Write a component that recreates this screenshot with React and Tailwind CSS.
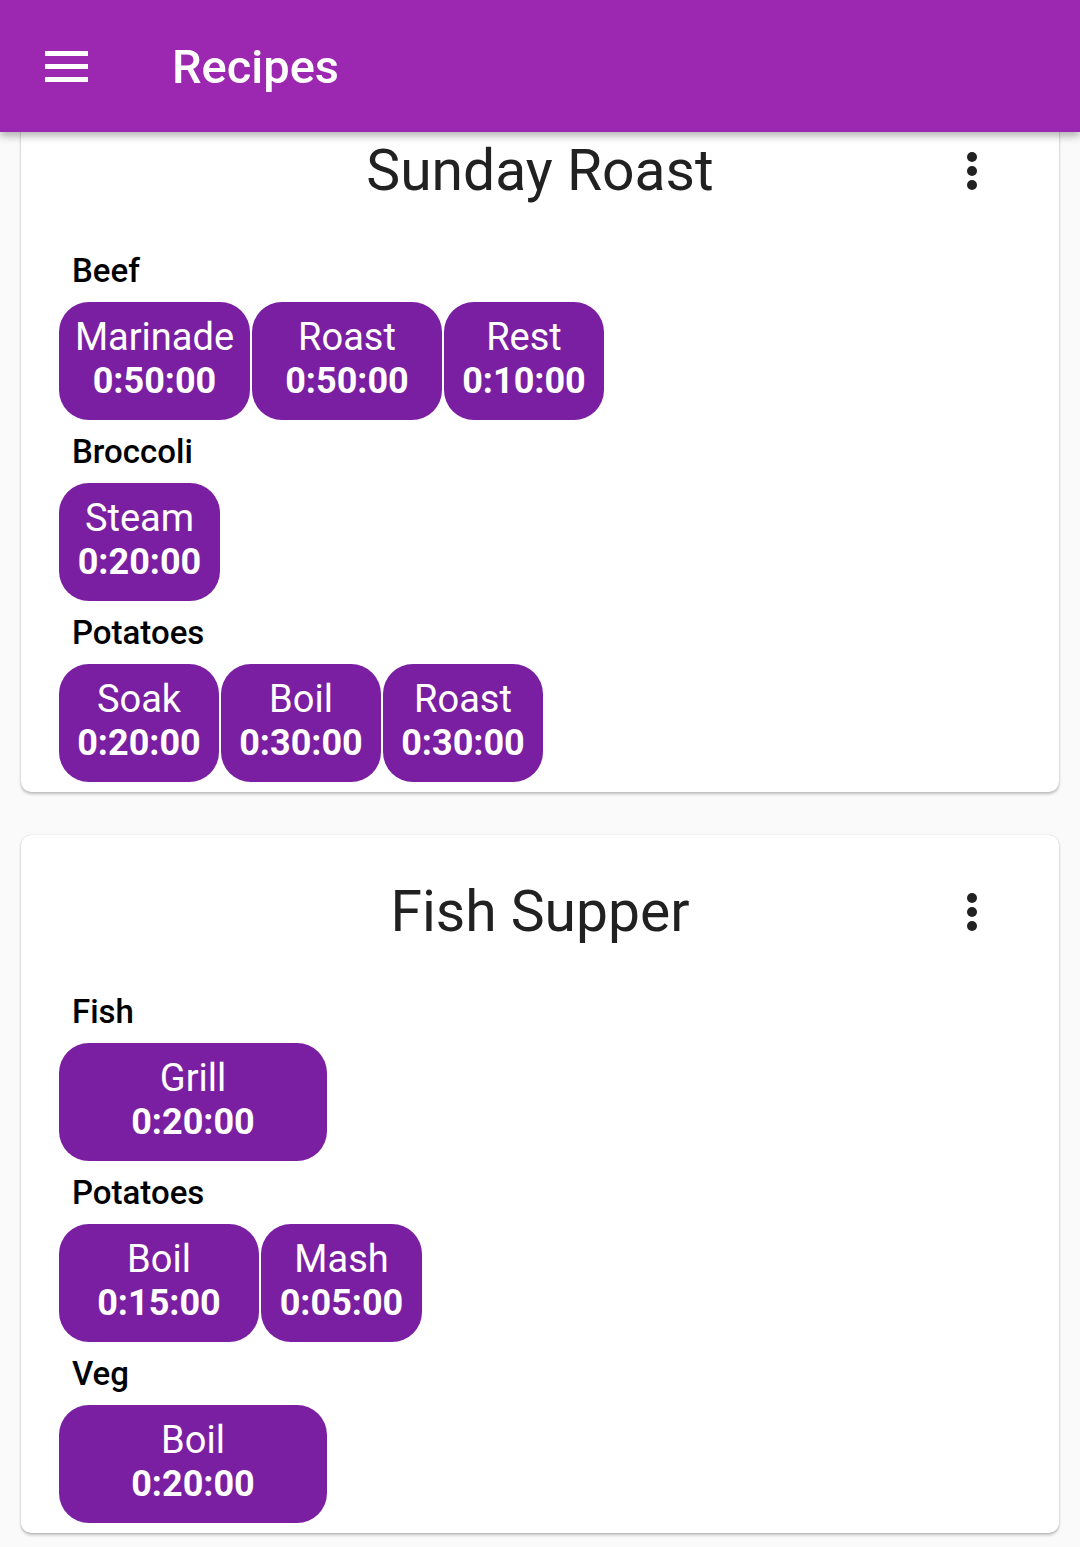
const recipes = [
  {
    title: 'Sunday Roast',
    groups: [
      { name: 'Beef', steps: [['Marinade', '0:50:00', 191], ['Roast', '0:50:00', 190], ['Rest', '0:10:00', 160]] },
      { name: 'Broccoli', steps: [['Steam', '0:20:00', 161]] },
      { name: 'Potatoes', steps: [['Soak', '0:20:00', 160], ['Boil', '0:30:00', 160], ['Roast', '0:30:00', 160]] },
    ],
  },
  {
    title: 'Fish Supper',
    groups: [
      { name: 'Fish', steps: [['Grill', '0:20:00', 268]] },
      { name: 'Potatoes', steps: [['Boil', '0:15:00', 200], ['Mash', '0:05:00', 161]] },
      { name: 'Veg', steps: [['Boil', '0:20:00', 268]] },
    ],
  },
];

function Kebab() {
  return (
    <svg width="12" height="42" viewBox="0 0 12 42" className="absolute right-[81px] top-1/2 -translate-y-1/2">
      <circle cx="6" cy="7" r="5" fill="#212121" />
      <circle cx="6" cy="21" r="5" fill="#212121" />
      <circle cx="6" cy="35" r="5" fill="#212121" />
    </svg>
  );
}

function Step({ label, time, width }) {
  return (
    <div
      className="h-[118px] rounded-[30px] bg-[#7b1fa2] text-white flex flex-col items-center pt-[13px] shrink-0"
      style={{ width }}
    >
      <span className="text-[38px] leading-[44px] font-normal">{label}</span>
      <span className="text-[36px] leading-[44px] font-bold">{time}</span>
    </div>
  );
}

function RecipeCard({ recipe }) {
  return (
    <div className="bg-white rounded-[10px] shadow-[0_2px_3px_rgba(0,0,0,0.25),0_0_1px_rgba(0,0,0,0.2)] pt-[45px] pb-[10px] pl-[38px]">
      <div className="relative h-[64px] -ml-[38px] flex items-center justify-center">
        <h2 className="text-[57px] leading-[64px] text-[#212121] font-normal">{recipe.title}</h2>
        <Kebab />
      </div>
      <div className="mt-[36px] flex flex-col">
        {recipe.groups.map((g) => (
          <div key={g.name}>
            <div className="h-[63px] flex items-center pl-[13px] text-[33px] font-medium text-black leading-none">
              {g.name}
            </div>
            <div className="flex gap-[2px]">
              {g.steps.map(([label, time, width], i) => (
                <Step key={i} label={label} time={time} width={width} />
              ))}
            </div>
          </div>
        ))}
      </div>
    </div>
  );
}

export default function App() {
  return (
    <div className="min-h-screen bg-[#fafafa] font-['Roboto',sans-serif]">
      <header className="fixed top-0 inset-x-0 z-10 h-[132px] bg-[#9c27b0] shadow-[0_4px_8px_rgba(0,0,0,0.3)] flex items-center">
        <div className="ml-[45px] w-[43px] flex flex-col gap-[8px]">
          <span className="h-[5px] bg-white" />
          <span className="h-[5px] bg-white" />
          <span className="h-[5px] bg-white" />
        </div>
        <h1 className="ml-[84px] text-[47px] font-medium text-white leading-none">Recipes</h1>
      </header>
      <main className="pt-[94px] px-[21px] pb-[14px] flex flex-col gap-[43px]">
        {recipes.map((r) => (
          <RecipeCard key={r.title} recipe={r} />
        ))}
      </main>
    </div>
  );
}
